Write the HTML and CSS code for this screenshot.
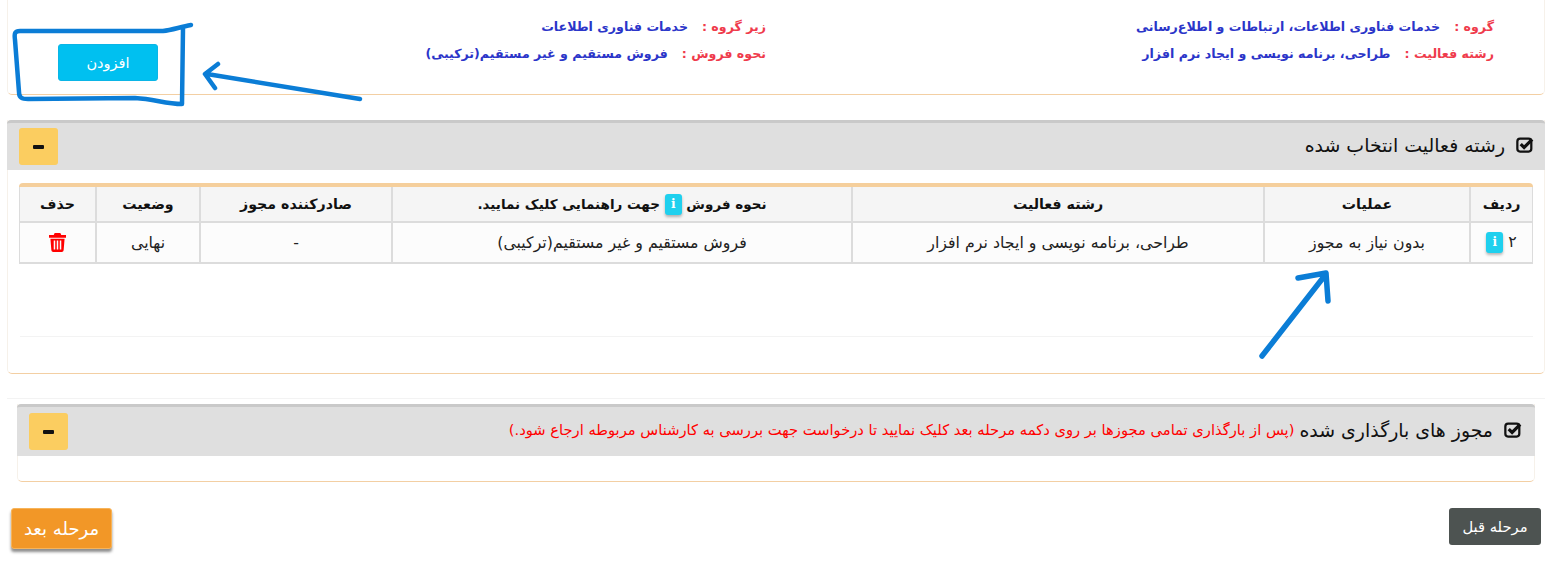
FILE: index.html
```html
<!DOCTYPE html>
<html lang="fa" dir="rtl">
<head>
<meta charset="utf-8">
<title>مجوز</title>
<link rel="stylesheet" href="styles.css">
</head>
<body>
<div class="page">
  <section class="card info-card">
    <div class="info-col first">
      <p class="info-line"><span class="label">گروه :</span><span class="value">خدمات فناوری اطلاعات، ارتباطات و اطلاع‌رسانی</span></p>
      <p class="info-line"><span class="label">رشته فعالیت :</span><span class="value">طراحی، برنامه نویسی و ایجاد نرم افزار</span></p>
    </div>
    <div class="info-col second">
      <p class="info-line"><span class="label">زیر گروه :</span><span class="value">خدمات فناوری اطلاعات</span></p>
      <p class="info-line"><span class="label">نحوه فروش :</span><span class="value">فروش مستقیم و غیر مستقیم(ترکیبی)</span></p>
    </div>
    <div class="add-col"><button class="btn-add" type="button">افزودن</button></div>
  </section>

  <section class="card selected-card">
    <header class="panel-head">
      <h2 class="panel-title">
        <svg class="check" viewBox="0 0 16 16"><rect x="1.2" y="2.4" width="12.4" height="11.4" rx="2.4" fill="none" stroke="#111" stroke-width="2"/><path d="M4.2 7.2 7.2 10.2 14.4 3" fill="none" stroke="#111" stroke-width="2.8"/></svg>
        <span>رشته فعالیت انتخاب شده</span>
      </h2>
      <button class="btn-toggle" type="button"><span class="minus"></span></button>
    </header>
    <div class="table-wrap">
      <div class="grid-box">
      <table class="grid">
        <thead>
          <tr>
            <th class="c-row">ردیف</th>
            <th class="c-op">عملیات</th>
            <th class="c-act">رشته فعالیت</th>
            <th class="c-sale">نحوه فروش <span class="info-badge">i</span> جهت راهنمایی کلیک نمایید.</th>
            <th class="c-issuer">صادرکننده مجوز</th>
            <th class="c-state">وضعیت</th>
            <th class="c-del">حذف</th>
          </tr>
        </thead>
        <tbody>
          <tr>
            <td>۲ <span class="info-badge">i</span></td>
            <td>بدون نیاز به مجوز</td>
            <td>طراحی، برنامه نویسی و ایجاد نرم افزار</td>
            <td>فروش مستقیم و غیر مستقیم(ترکیبی)</td>
            <td>-</td>
            <td>نهایی</td>
            <td><svg class="trash" viewBox="0 0 18 20"><path fill="#f00" d="M6 0h6l1 2h5v3H0V2h5zM1.500 6h15l-1 12.200A2 2 0 0 1 13.500 20h-9a2 2 0 0 1-2-1.800zM5 8v9.500h1.600V8zm3.200 0v9.500h1.600V8zM11.400 8v9.500H13V8z"/></svg></td>
          </tr>
        </tbody>
      </table>
      </div>
      <div class="table-foot"></div>
    </div>
  </section>

  <div class="upload-wrap">
    <section class="card upload-card">
      <header class="panel-head">
        <h2 class="panel-title">
          <svg class="check" viewBox="0 0 16 16"><rect x="1.2" y="2.4" width="12.4" height="11.4" rx="2.4" fill="none" stroke="#111" stroke-width="2"/><path d="M4.2 7.2 7.2 10.2 14.4 3" fill="none" stroke="#111" stroke-width="2.8"/></svg>
          <span>مجوز های بارگذاری شده</span>
          <small class="note">(پس از بارگذاری تمامی مجوزها بر روی دکمه مرحله بعد کلیک نمایید تا درخواست جهت بررسی به کارشناس مربوطه ارجاع شود.)</small>
        </h2>
        <button class="btn-toggle" type="button"><span class="minus"></span></button>
      </header>
      <div class="upload-body"></div>
    </section>
  </div>

  <footer class="actions">
    <button class="btn-prev" type="button">مرحله قبل</button>
    <button class="btn-next" type="button">مرحله بعد</button>
  </footer>
</div>

<svg class="scribble" viewBox="0 0 1561 564" aria-hidden="true">
  <g fill="none" stroke="#0b7dd6" stroke-linecap="round" stroke-linejoin="round">
    <path stroke-width="4.500" d="M191 25 C180 27 172 30 163 31 L20 31 C15 31 14 33 15 40 L19 92 C19 98 22 99 28 99 L135 98 C155 99 165 104 182 104 L183 28"/>
    <path stroke-width="4.500" d="M360 99 L207 74 M218 64 L205 74 L215 88"/>
    <path stroke-width="5.500" d="M1262 356 L1326 274 M1298 278 L1326 273 L1328 301"/>
  </g>
</svg>
</body>
</html>
```

FILE: styles.css
```css
* { box-sizing: border-box; }
html, body { margin: 0; padding: 0; background: #fff; }
body {
  position: relative;
  width: 1561px;
  height: 564px;
  overflow: hidden;
  font-family: "DejaVu Sans", "Noto Sans", sans-serif;
  font-size: 13px;
  color: #222;
}
.page { padding-left: 7px; padding-right: 16px; }
.card {
  background: #fff;
  border: 1px solid #f6f1ea;
  border-bottom-color: #f3cfa3;
  border-radius: 0 0 5px 5px;
}
.info-card {
  display: flex;
  height: 95px;
  border-top: 0;
  padding: 13px 50px 0 0;
}
.info-col { flex: none; }
.info-col.first { width: 728px; }
.info-col.second { width: 500px; }
.info-line {
  margin: 0;
  height: 27px;
  line-height: 27px;
  font-size: 12.6px;
  font-weight: bold;
  white-space: nowrap;
}
.label { color: #ef3b4c; margin-left: 14px; }
.value { color: #2b35c9; }
.add-col {
  flex: 1;
  min-width: 0;
  display: flex;
  justify-content: flex-end;
  align-items: flex-start;
  padding: 31px 0 0 50px;
}
.btn-add {
  flex: none;
  width: 100px;
  height: 37px;
  border: 1px solid #0bb5e6;
  border-radius: 3px;
  background: #00c0f0;
  color: #fff;
  font-family: inherit;
  font-size: 14.5px;
}
.selected-card { margin-top: 25px; height: 254px; border-top: 0; }
.panel-head {
  display: flex;
  justify-content: space-between;
  align-items: center;
  background: #dfdfdf;
  border-top: 3px solid #c9c9c9;
  border-radius: 4px 4px 0 0;
  height: 50px;
  padding: 0 11px 0 12px;
  margin: 0 -1px;
}
.panel-title {
  display: flex;
  align-items: center;
  margin: 0 0 4px;
  font-size: 18.9px;
  font-weight: normal;
  color: #111;
  white-space: nowrap;
}
.check { width: 18px; height: 18px; margin-left: 11px; flex: none; }
.note { color: #f00; font-size: 14.7px; margin-right: 5px; }
.btn-toggle {
  display: flex;
  align-items: center;
  justify-content: center;
  width: 39px;
  height: 37px;
  padding: 0;
  border: 0;
  border-radius: 3px;
  background: #fbcd60;
}
.minus { width: 11px; height: 4px; border-radius: 1px; background: #111; }
.table-wrap { padding: 13px 11px 0 12px; }
.grid-box {
  width: 1514px;
  border-top: 4px solid #f5cf9c;
  border-radius: 4px 4px 0 0;
}
.grid {
  width: 1514px;
  table-layout: fixed;
  border-collapse: separate;
  border-spacing: 0;
  text-align: center;
}
.grid th, .grid td { border: 0 solid #dcdcdc; border-width: 0 0 2px 2px; padding: 0; }
.grid tr > :first-child { border-right-width: 1px; }
.grid tr > :last-child { border-left-width: 1px; }
.grid thead tr { height: 36px; background: #f5f5f5; }
.grid tbody tr { height: 41px; }
.grid th { font-size: 14.2px; font-weight: bold; color: #111; }
.grid th.c-sale { font-size: 13.5px; }
.grid td { font-size: 15.8px; color: #222; background: #fcfcfc; }
.c-row { width: 64px; }
.c-op { width: 206px; }
.c-act { width: 412px; }
.c-sale { width: 460px; }
.c-issuer { width: 192px; }
.c-state { width: 104px; }
.c-del { width: 76px; }
.info-badge {
  display: inline-block;
  width: 17px;
  height: 21px;
  line-height: 21px;
  vertical-align: middle;
  border-radius: 3px;
  background: #1fd0ee;
  box-shadow: 0 2px 3px rgba(0, 0, 0, 0.28);
  color: #fff;
  font-family: "DejaVu Serif", serif;
  font-size: 12px;
  font-weight: bold;
  text-align: center;
}
.trash { display: block; width: 17px; height: 19px; margin: 0 auto; }
.table-foot { margin-top: 72px; border-top: 1px solid #f3f3f3; }
.upload-wrap { margin-top: 24px; border-top: 1px solid #f3f3f3; padding: 5px 10px 0; }
.upload-card { height: 78px; border-top: 0; }
.upload-card .panel-head { height: 52px; padding: 0 13px 0 12px; }
.upload-body { height: 25px; }
.actions {
  display: flex;
  justify-content: space-between;
  align-items: flex-start;
  margin: 26px 4px 0 4px;
}
.btn-prev {
  width: 92px;
  height: 37px;
  border: 0;
  border-radius: 3px;
  background: #4d5351;
  color: #fff;
  font-family: inherit;
  font-size: 14.7px;
}
.btn-next {
  width: 101px;
  height: 41px;
  border: 1px solid #f7b45a;
  border-radius: 3px;
  background: #f29727;
  box-shadow: 0 3px 3px rgba(0, 0, 0, 0.45);
  color: #fff;
  font-family: inherit;
  font-size: 18px;
}
.scribble { position: absolute; left: 0; top: 0; width: 1561px; height: 564px; pointer-events: none; }
```
